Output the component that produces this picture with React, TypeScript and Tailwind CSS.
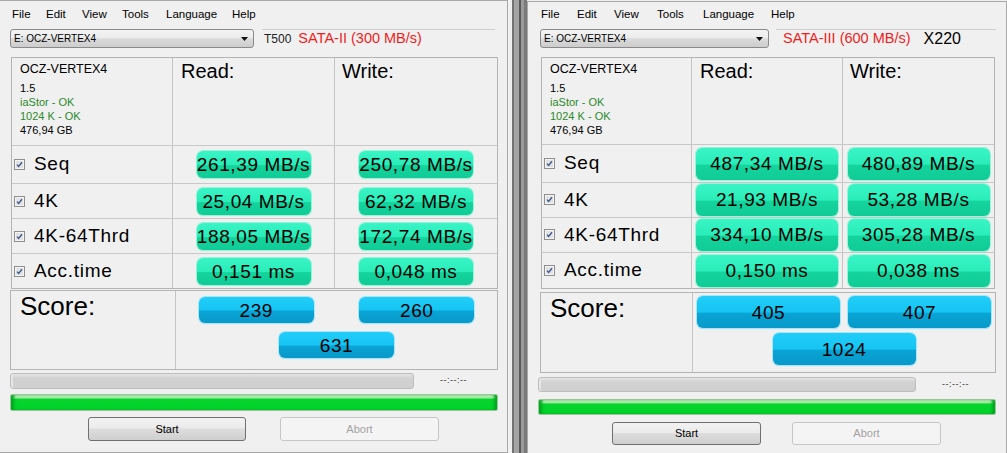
import clsx from 'clsx';

type Bench = {
  reads: string[];
  writes: string[];
  scores: [string, string, string];
};

type Layout = {
  win: string;
  menu: string;
  menuItems: string[];
  ddRow: string;
  dd: string;
  ddTail: string;
  grid: string;
  cols: [string, string, string];
  rows: string[];
  valPill: string;
  score: string;
  scoreCol: string;
  scorePad: string;
  scorePill: string;
  prog: string;
  progBar: string;
  timeLbl: string;
  green: string;
  btns: string;
  startBtn: string;
  abortBtn: string;
};

const GREEN_PILL =
  'bg-[linear-gradient(to_bottom,#3af4c6_0%,#2aedb9_50%,#15d49e_54%,#10cb95_100%)] shadow-[0_0_0_1px_#9af2d8,0_1px_1px_#7fe6c6]';
const BLUE_PILL =
  'bg-[linear-gradient(to_bottom,#22cdf8_0%,#16c4f3_50%,#0aa4d5_54%,#0799c9_100%)] shadow-[0_0_0_1px_#a6e6f8,0_1px_1px_#86d6ef]';

function Pill({ children, cls, blue }: { children: string; cls: string; blue?: boolean }) {
  return (
    <div
      className={clsx(
        'flex items-center justify-center whitespace-nowrap rounded-[6px] text-[19px] tracking-[0.6px] text-black leading-none',
        blue ? BLUE_PILL : GREEN_PILL,
        cls,
      )}
    >
      {children}
    </div>
  );
}

function Check() {
  return (
    <svg width="11" height="11" viewBox="0 0 11 11" className="shrink-0">
      <rect x="0.5" y="0.5" width="10" height="10" fill="#f4f4f4" stroke="#8f8f8f" />
      <rect x="2" y="2" width="7" height="7" fill="#e2e2e2" />
      <path d="M3 5.6 L4.6 7.4 L8 3.2" stroke="#3f5a8f" strokeWidth="1.4" fill="none" />
    </svg>
  );
}

const LABELS = ['Seq', '4K', '4K-64Thrd', 'Acc.time'];
const MENU = ['File', 'Edit', 'View', 'Tools', 'Language', 'Help'];

function Window({ l, b, tail }: { l: Layout; b: Bench; tail: React.ReactNode }) {
  return (
    <div className={clsx('flex flex-col shrink-0 h-[453px] bg-[#f0f0f0]', l.win)}>
      {/* menu */}
      <div className={clsx('flex items-center text-[11.5px] text-black', l.menu)}>
        {MENU.map((m, i) => (
          <span key={m} className={clsx('shrink-0', l.menuItems[i])}>
            {m}
          </span>
        ))}
      </div>

      {/* drive selector + interface */}
      <div className={clsx('flex items-stretch', l.ddRow)}>
        <div
          className={clsx(
            'flex items-center justify-between rounded-[3px] border border-[#8a8a8a] pl-[3px] pr-[5px] text-[10px] text-black',
            'bg-[linear-gradient(to_bottom,#f3f3f3_0%,#ececec_45%,#dadada_52%,#cdcdcd_100%)]',
            l.dd,
          )}
        >
          <span>E: OCZ-VERTEX4</span>
          <svg width="7" height="4" viewBox="0 0 7 4">
            <path d="M0 0 H7 L3.5 4 Z" fill="#111" />
          </svg>
        </div>
        <div className={clsx('flex items-center border-t border-[#cfcfcf] whitespace-nowrap', l.ddTail)}>{tail}</div>
      </div>

      {/* results grid */}
      <div className={clsx('flex flex-col border border-[#b4b4b4]', l.grid)}>
        <div className={clsx('flex', l.rows[0])}>
          <div className={clsx('border-r border-[#c4c4c4] pl-[8px] pt-[4px]', l.cols[0])}>
            <div className="text-[12.5px] leading-[15px] text-black">OCZ-VERTEX4</div>
            <div className="mt-[4px] text-[11px] leading-[14px]">
              <div className="text-black">1.5</div>
              <div className="text-[#2b8a2b]">iaStor - OK</div>
              <div className="text-[#2b8a2b]">1024 K - OK</div>
              <div className="text-black">476,94 GB</div>
            </div>
          </div>
          <div className={clsx('border-r border-[#c4c4c4] pl-[8px] pt-[1px] text-[20px] leading-[24px] text-black', l.cols[1])}>
            Read:
          </div>
          <div className={clsx('pl-[7px] pt-[1px] text-[20px] leading-[24px] text-black', l.cols[2])}>Write:</div>
        </div>
        {LABELS.map((lab, i) => (
          <div key={lab} className={clsx('flex border-t border-[#c8c8c8]', l.rows[i + 1])}>
            <div className={clsx('flex items-center gap-[9px] border-r border-[#c4c4c4] pl-[2px]', l.cols[0])}>
              <Check />
              <span className="text-[19px] tracking-[0.7px] text-black">{lab}</span>
            </div>
            <div className={clsx('flex items-center justify-center border-r border-[#c4c4c4]', l.cols[1])}>
              <Pill cls={l.valPill}>{b.reads[i]}</Pill>
            </div>
            <div className={clsx('flex items-center justify-center', l.cols[2])}>
              <Pill cls={l.valPill}>{b.writes[i]}</Pill>
            </div>
          </div>
        ))}
      </div>

      {/* score */}
      <div className={clsx('flex border border-[#b4b4b4]', l.score)}>
        <div className={clsx('border-r border-[#c4c4c4] pl-[9px] text-[26px] leading-[30px] text-black', l.scoreCol)}>
          Score:
        </div>
        <div className={clsx('flex flex-1 flex-col', l.scorePad)}>
          <div className="grid grid-cols-2">
            <div className="flex justify-center">
              <Pill blue cls={l.scorePill}>{b.scores[0]}</Pill>
            </div>
            <div className="flex justify-center">
              <Pill blue cls={l.scorePill}>{b.scores[1]}</Pill>
            </div>
          </div>
          <div className="flex justify-center">
            <Pill blue cls={l.scorePill}>{b.scores[2]}</Pill>
          </div>
        </div>
      </div>

      {/* progress */}
      <div className={clsx('flex items-center', l.prog)}>
        <div
          className={clsx(
            'h-full rounded-[3px] border border-[#bdbdbd] bg-[linear-gradient(to_bottom,#e4e4e4_0%,#d2d2d2_30%,#cfcfcf_100%)] shadow-[inset_2px_0_0_#e6e6e6]',
            l.progBar,
          )}
        />
        <span className={clsx('text-[9px] tracking-[0.5px] text-[#333]', l.timeLbl)}>--:--:--</span>
      </div>
      <div
        className={clsx(
          'rounded-[2px] border border-[#9ec49e] bg-[linear-gradient(to_bottom,#d2f7d2_0%,#9fea9f_18%,#06d52d_30%,#00d12a_100%)] shadow-[inset_4px_0_3px_-1px_#00a820,inset_-4px_0_3px_-1px_#00a820]',
          l.green,
        )}
      />

      {/* buttons */}
      <div className={clsx('flex', l.btns)}>
        <div
          className={clsx(
            'flex items-center justify-center rounded-[3px] border border-[#707070] text-[11px] text-black',
            'bg-[linear-gradient(to_bottom,#f2f2f2_0%,#ebebeb_45%,#dddddd_50%,#cfcfcf_100%)]',
            l.startBtn,
          )}
        >
          Start
        </div>
        <div
          className={clsx(
            'flex items-center justify-center rounded-[3px] border border-[#c6c6c6] bg-[#f4f4f4] text-[11px] text-[#a3a3a3]',
            l.abortBtn,
          )}
        >
          Abort
        </div>
      </div>
    </div>
  );
}

const t500: Bench = {
  reads: ['261,39 MB/s', '25,04 MB/s', '188,05 MB/s', '0,151 ms'],
  writes: ['250,78 MB/s', '62,32 MB/s', '172,74 MB/s', '0,048 ms'],
  scores: ['239', '260', '631'],
};

const x220: Bench = {
  reads: ['487,34 MB/s', '21,93 MB/s', '334,10 MB/s', '0,150 ms'],
  writes: ['480,89 MB/s', '53,28 MB/s', '305,28 MB/s', '0,038 ms'],
  scores: ['405', '407', '1024'],
};

const leftLayout: Layout = {
  win: 'w-[508px] border-t border-r border-b border-[#a9a9a9]',
  menu: 'h-[28px] pl-[12px]',
  menuItems: ['w-[34px]', 'w-[36px]', 'w-[40px]', 'w-[44px]', 'w-[66px]', ''],
  ddRow: 'h-[19px]',
  dd: 'ml-[10px] w-[244px]',
  ddTail: 'ml-[8px] w-[233px] pl-[2px]',
  grid: 'ml-[11px] mt-[9px] w-[487px] h-[232px]',
  cols: ['w-[161px]', 'w-[162px]', 'w-[162px]'],
  rows: ['h-[87px]', 'h-[38px]', 'h-[35px]', 'h-[35px]', 'h-[35px]'],
  valPill: 'w-[114px] h-[27px]',
  score: 'ml-[10px] mt-[1px] w-[488px] h-[80px]',
  scoreCol: 'w-[165px]',
  scorePad: 'pt-[6px] gap-[9px]',
  scorePill: 'w-[115px] h-[26px]',
  prog: 'ml-[10px] mt-[3px] h-[16px]',
  progBar: 'w-[404px]',
  timeLbl: 'ml-[26px]',
  green: 'ml-[10px] mt-[5px] w-[488px] h-[17px]',
  btns: 'ml-[88px] mt-[6px] h-[24px] gap-[34px]',
  startBtn: 'w-[158px]',
  abortBtn: 'w-[159px]',
};

const rightLayout: Layout = {
  win: 'w-[480px] border-t border-l border-r border-[#a9a9a9] mt-[1px]',
  menu: 'h-[25px] pl-[13px]',
  menuItems: ['w-[36px]', 'w-[37px]', 'w-[43px]', 'w-[46px]', 'w-[68px]', ''],
  ddRow: 'h-[19px] mt-[2px]',
  dd: 'ml-[12px] w-[229px]',
  ddTail: 'ml-[7px] w-[220px] pl-[7px]',
  grid: 'ml-[13px] mt-[9px] w-[454px] h-[232px]',
  cols: ['w-[150px]', 'w-[151px]', 'w-[151px]'],
  rows: ['h-[87px]', 'h-[38px]', 'h-[35px]', 'h-[36px]', 'h-[36px]'],
  valPill: 'w-[142px] h-[32px]',
  score: 'ml-[12px] mt-[3px] w-[456px] h-[81px]',
  scoreCol: 'w-[152px]',
  scorePad: 'pt-[3px] gap-[5px]',
  scorePill: 'w-[143px] h-[32px]',
  prog: 'ml-[10px] mt-[4px] h-[15px]',
  progBar: 'w-[378px]',
  timeLbl: 'ml-[26px]',
  green: 'ml-[10px] mt-[7px] w-[458px] h-[16px]',
  btns: 'ml-[84px] mt-[7px] h-[23px] gap-[31px]',
  startBtn: 'w-[149px]',
  abortBtn: 'w-[149px]',
};

export default function App() {
  return (
    <div className="flex w-[1007px] h-[453px] overflow-hidden bg-[#f0f0f0] font-['Liberation_Sans',Arial,sans-serif]">
      <Window
        l={leftLayout}
        b={t500}
        tail={
          <>
            <span className="text-[12px] text-[#222]">T500</span>
            <span className="ml-[7px] text-[14.5px] text-[#f21c1c]">SATA-II (300 MB/s)</span>
          </>
        }
      />
      {/* splitter between the two windows */}
      <div className="flex h-[453px] w-[19px] shrink-0">
        <div className="w-[4px] bg-[#f0f0f0]" />
        <div className="w-[2px] bg-[#747474]" />
        <div className="w-[5px] bg-[#a4a4a4]" />
        <div className="w-[2px] bg-[#595959]" />
        <div className="w-[3px] bg-[#9b9b9b]" />
        <div className="w-[3px] bg-[#7a7a7a]" />
      </div>
      <Window
        l={rightLayout}
        b={x220}
        tail={
          <>
            <span className="text-[14.5px] text-[#f21c1c]">SATA-III (600 MB/s)</span>
            <span className="ml-[13px] text-[16px] text-black">X220</span>
          </>
        }
      />
    </div>
  );
}
